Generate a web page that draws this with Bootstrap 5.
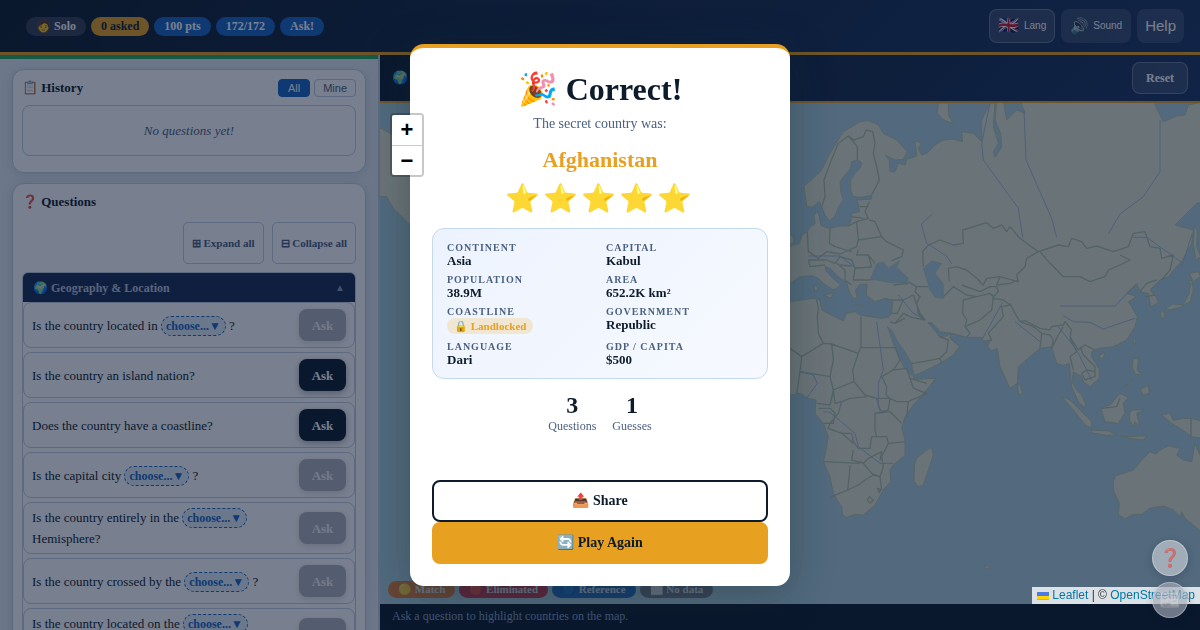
<!DOCTYPE html>
<html lang="en">
<head>
<meta charset="utf-8">
<meta name="viewport" content="width=device-width, initial-scale=1">
<title>Guess the Country</title>
<link href="https://cdn.jsdelivr.net/npm/bootstrap@5.3.0/dist/css/bootstrap.min.css" rel="stylesheet">
<style>
:root{--navy:#0d1b2a;--gold:#e8a020;--blue:#1565c0;--muted-ink:#4a6080;--line:#c0cfe0}
body{font-family:"Liberation Serif",serif;color:var(--navy);font-size:13px;line-height:20px}
button{font-family:inherit}
.sans{font-family:"Liberation Sans",sans-serif}
.topbar{height:55px;padding:0 16px 0 26px;border-bottom:3px solid var(--gold);background:linear-gradient(135deg,#0d1b2a,#1a3560)}
.pills{gap:5px}
.tools{gap:6px}
.pill{border-radius:20px;padding:0 10px;line-height:19px;font-size:12px;font-weight:700;color:#fff;background:var(--blue);white-space:nowrap}
.pill-solo{background:#333f50}
.pill-gold{background:var(--gold);color:var(--navy)}
.toolbtn{height:34px;border-radius:8px;border:1px solid transparent;background:rgba(255,255,255,.13);color:#fff;line-height:16px}
.toolbtn-lined{border-color:rgba(255,255,255,.25)}
.toolbtn small{font-size:10px}
.tool-flag{font-size:17px;margin-right:5px}
.tool-emoji{font-size:15px;margin-right:4px}
.tool-help{font-size:15px;padding:0 7px}
.side{width:380px;border-right:2px solid var(--line);background:#e6edf6}
.side-bar{height:4px;background:#27ae60}
.side-body{padding:10px 12px;gap:10px}
.panel{background:#fff;border:1px solid var(--line);border-radius:12px;padding:9px;box-shadow:0 2px 12px rgba(13,27,42,.12)}
.panel-log{padding-bottom:16px}
.panel h2{font-size:13px;line-height:18px;font-weight:700;margin:0}
.tab-btn{font-size:11px;line-height:16px;padding:0 8px;border-radius:4px;border:1px solid var(--line);background:#fff;color:var(--muted-ink)}
.tab-on{background:var(--blue);border-color:var(--blue);color:#fff;padding:0 9px}
.empty-log{border:1px solid var(--line);border-radius:8px;height:51px;font-style:italic;color:var(--muted-ink)}
.folds{margin:11px 0 8px}
.fold-btn{height:42px;padding:0 8px;border:1px solid var(--line);border-radius:5px;background:#fff;color:var(--muted-ink);font-size:11px;font-weight:700}
.cat{border:1px solid var(--line);border-radius:6px 6px 0 0;overflow:hidden}
.cat-head{height:29px;padding:0 10px;border:0;background:#182a50;color:#b8c6da;font-weight:700;font-size:12px}
.caret-up{font-size:10px;color:#8a9ab5}
.ask-row{border:1px solid var(--line);border-radius:8px;min-height:46px;padding:4px 8px;background:#fff;line-height:21px}
.ask-btn{height:32px;width:47px;flex:none;border:0;border-radius:8px;background:#0d1b2a;color:#fff;font-weight:700;font-size:13px;box-shadow:0 2px 6px rgba(13,27,42,.35)}
.ask-btn:disabled{background:#b0b3ba;color:#f3f3f5;box-shadow:0 2px 6px rgba(13,27,42,.15)}
.chip{display:inline-block;height:20px;padding:0 4px;border:1px dashed var(--blue);border-radius:12px;background:#e3effa;color:var(--blue);font-weight:700;font-size:12px;line-height:16px;vertical-align:baseline}
.map-head{height:48px;padding:0 12px;border-bottom:2px solid var(--gold);background:linear-gradient(135deg,#0d1b2a,#1a3560)}
.globe{font-size:13px}
.reset-btn{height:32px;padding:0 13px;font-size:12px;font-weight:700}
.map-area{background:#aacfdb}
.map-area>svg{position:absolute;inset:0;width:100%;height:100%}
.land{fill:#e1e5cf;stroke:#b4c8a8;stroke-width:3;stroke-linejoin:round}
.sea{fill:#aacfdb;stroke:#b4c8a8;stroke-width:2}
.bord{fill:none;stroke:#adc0a4;stroke-width:4;stroke-linejoin:round}
.riv{fill:none;stroke:#a3b9d3;stroke-width:3}
.legend{left:8px;bottom:6px;gap:4px}
.legend span{border-radius:12px;padding:0 10px;line-height:17px;font-size:11px;font-weight:700;color:#e6eaf0;opacity:.9}
.lg-match{background:#e0752a}.lg-out{background:#c8283f}.lg-ref{background:var(--blue)}.lg-none{background:#6b7280}
.map-foot{height:26px;padding:0 12px;background:#0d1b2a;color:#8aa0c4;font-size:12px;line-height:25px}
.veil{position:fixed;inset:0;z-index:20;background:rgba(10,22,50,.55)}
.zoomer{position:absolute;left:10px;top:10px;z-index:30;border:2px solid rgba(0,0,0,.22);border-radius:4px;background-clip:padding-box}
.zoomer button{width:30px;height:30px;border:0;background:#fff;color:#000;font:700 22px/30px "Liberation Sans",sans-serif;padding:0}
.zoomer button+button{border-top:1px solid #ccc}
.credit{position:absolute;right:0;bottom:0;z-index:30;background:rgba(255,255,255,.8);padding:0 5px;font-size:12px;line-height:17px;color:#333}
.credit a{color:#0078a8;text-decoration:none}
.floaters{position:fixed;right:12px;bottom:12px;z-index:40;gap:6px}
.floaters button{width:36px;height:36px;border-radius:50%;border:1px solid rgba(255,255,255,.3);padding:0;font-size:18px;box-shadow:0 2px 8px rgba(13,27,42,.2)}
.fl-help{background:rgba(255,255,255,.45);color:rgba(0,0,0,.6)}
.fl-news{background:rgba(165,170,185,.65);color:rgba(0,0,0,.35)}
.win{width:380px;border-top:4px solid var(--gold);border-radius:14px;background:#fff;padding:22px;box-shadow:0 8px 40px rgba(13,40,40,.35)}
.win h1{font-size:32px;line-height:38px;font-weight:700;margin:0 0 5px}
.win-sub{font-size:14px;line-height:21px;color:var(--muted-ink);margin:0 0 10px}
.win-name{font-size:22px;line-height:32px;font-weight:700;color:var(--gold)}
.stars{font-size:28px;line-height:42px;letter-spacing:3px;padding-top:2px}
.facts{display:grid;grid-template-columns:1fr 1fr;gap:6px 12px;border:1px solid #c2d9f0;border-radius:12px;padding:12px 14px;margin:8px 0 12px;background:linear-gradient(135deg,#edf3fe,#f6f9ff)}
.facts dt{font-size:10px;line-height:13px;letter-spacing:1px;color:var(--muted-ink)}
.facts dd{font-size:13px;line-height:13px;font-weight:700;margin:0}
.locked{display:inline-block;background:#f0e6d2;color:var(--gold);border-radius:10px;padding:0 7px;font-size:11px;line-height:16px}
.score{margin-bottom:47px}
.score b{display:block;font-size:24px;line-height:28px}
.score span{font-size:12px;line-height:14px;color:var(--muted-ink);display:block}
.big-btn{height:42px;border-radius:8px;font-size:14px;font-weight:700;border:2px solid var(--navy);background:#fff;color:var(--navy)}
.big-gold{background:var(--gold);border-color:var(--gold)}
</style>
</head>
<body>
<div class="vh-100 d-flex flex-column overflow-hidden">
<header class="topbar d-flex align-items-center justify-content-between flex-shrink-0">
  <div class="pills d-flex align-items-center">
    <span class="pill pill-solo">🧑 Solo</span><span class="pill pill-gold">0 asked</span><span class="pill">100 pts</span><span class="pill">172/172</span><span class="pill">Ask!</span>
  </div>
  <div class="tools d-flex sans">
    <button type="button" class="toolbtn toolbtn-lined d-flex align-items-center px-2"><span class="tool-flag">🇬🇧</span><small>Lang</small></button>
    <button type="button" class="toolbtn d-flex align-items-center px-2"><span class="tool-emoji">🔊</span><small>Sound</small></button>
    <button type="button" class="toolbtn tool-help">Help</button>
  </div>
</header>
<div class="d-flex flex-grow-1 overflow-hidden">
  <aside class="side flex-shrink-0 overflow-hidden">
    <div class="side-bar"></div>
    <div class="d-flex flex-column side-body">
      <section class="panel panel-log">
        <div class="d-flex align-items-center justify-content-between mb-2">
          <h2>📋 History</h2>
          <div class="d-flex gap-1 sans"><button type="button" class="tab-btn tab-on">All</button><button type="button" class="tab-btn">Mine</button></div>
        </div>
        <div class="empty-log d-flex align-items-center justify-content-center">No questions yet!</div>
      </section>
      <section class="panel">
        <h2>❓ Questions</h2>
        <div class="d-flex gap-2 justify-content-end folds"><button type="button" class="fold-btn">⊞ Expand all</button><button type="button" class="fold-btn">⊟ Collapse all</button></div>
        <div class="cat">
          <button type="button" class="cat-head w-100 d-flex align-items-center justify-content-between"><span>🌍 Geography &amp; Location</span><span class="caret-up">▲</span></button>
          <div class="d-flex flex-column gap-1">
            <div class="ask-row d-flex align-items-center justify-content-between"><div>Is the country located in <button type="button" class="chip">choose...▼</button> ?</div><button type="button" class="ask-btn" disabled>Ask</button></div>
            <div class="ask-row d-flex align-items-center justify-content-between"><div>Is the country an island nation?</div><button type="button" class="ask-btn">Ask</button></div>
            <div class="ask-row d-flex align-items-center justify-content-between"><div>Does the country have a coastline?</div><button type="button" class="ask-btn">Ask</button></div>
            <div class="ask-row d-flex align-items-center justify-content-between"><div>Is the capital city <button type="button" class="chip">choose...▼</button> ?</div><button type="button" class="ask-btn" disabled>Ask</button></div>
            <div class="ask-row d-flex align-items-center justify-content-between"><div>Is the country entirely in the <button type="button" class="chip">choose...▼</button> Hemisphere?</div><button type="button" class="ask-btn" disabled>Ask</button></div>
            <div class="ask-row d-flex align-items-center justify-content-between"><div>Is the country crossed by the <button type="button" class="chip">choose...▼</button> ?</div><button type="button" class="ask-btn" disabled>Ask</button></div>
            <div class="ask-row d-flex align-items-center justify-content-between"><div>Is the country located on the <button type="button" class="chip">choose...▼</button> Hemisphere?</div><button type="button" class="ask-btn" disabled>Ask</button></div>
          </div>
        </div>
      </section>
    </div>
  </aside>
  <main class="flex-grow-1 d-flex flex-column">
    <div class="map-head d-flex align-items-center justify-content-between"><span class="globe">🌍</span><button type="button" class="toolbtn toolbtn-lined reset-btn">Reset</button></div>
    <div class="map-area position-relative flex-grow-1">
      <svg viewBox="-1200 9 2460 1503" preserveAspectRatio="xMidYMid slice" aria-hidden="true">
        <path class="land" d="M72 258L80 318 95 322 118 305 125 320 135 345 148 362 165 350 175 320 190 300 182 275 180 245 195 225 212 205 215 185 235 180 246 190 240 205 225 220 212 240 212 270 220 290 245 292 275 286 275 297 230 300 236 315 238 335 215 340 212 365 205 378 180 378 150 385 125 378 120 365 118 350 112 334 102 345 105 372 90 380 82 396 66 405 58 430 30 440-60 480 0 560 30 550 60 530 95 527 115 535 132 552 160 570 175 560 182 555 160 536 140 515 135 500 150 505 175 530 200 548 208 575 220 595 232 595 226 570 240 553 262 553 258 585 285 605 315 595 338 600 335 640 325 652 300 655 240 645 225 635 200 640 190 663 160 648 125 630 120 600 100 595 30 605-300 640-300 860 30 885 60 880 85 895 108 900 105 940 130 970 145 1010 140 1040 130 1085 150 1130 160 1180 185 1220 188 1245 200 1252 225 1243 250 1245 285 1215 310 1170 332 1145 330 1110 340 1095 375 1065 375 1020 365 985 375 950 400 915 440 870 467 835 402 838 400 828 430 815 480 790 520 765 538 740 525 728 510 715 512 698 500 708 478 710 468 695 443 668 455 668 480 695 515 700 560 712 605 712 612 728 630 725 622 740 635 752 652 745 660 800 690 865 712 850 715 800 750 770 780 745 815 740 830 790 850 797 868 790 875 860 895 905 915 925 916 910 905 885 890 870 876 845 880 815 905 830 910 845 930 860 958 835 958 808 935 770 935 755 945 750 960 745 1000 740 1040 720 1065 680 1072 650 1055 620 1045 605 1070 590 1040 580 1072 553 1080 575 1105 580 1112 620 1135 608 1128 590 1110 570 1140 540 1165 530 1190 500 1205 485 1235 430 1240 390 1185 375 1250 310 1300 305 1300 0 1225 15 1215 45 1190 48 1150 65 1128 20 1120 0 720 0 735 40 710 30 680 60 670 0 650 0 645 60 662 100 665 140 645 172 640 155 655 130 640 80 645 9 630 9 605 60 605 125 580 100 545 95 548 125 520 118 490 120 465 135 440 160 425 165 415 145 425 130 405 122 410 168 380 178 375 195 355 190 345 215 330 215 328 180 315 165 345 180 370 178 382 155 350 120 310 100 295 75 265 62 240 65 190 95 150 160 125 210 100 235Z"/>
        <path class="sea" d="M270 540L290 492 310 486 325 505 358 482 350 502 385 535 380 548 330 548 290 540ZM430 505L455 483 485 490 465 520 490 552 490 595 465 592 450 570ZM322 680L335 690 350 720 375 755 395 790 402 825 393 825 370 800 345 745Z"/>
        <g class="land">
          <path d="M403 1095L410 1075 440 1050 455 1042 460 1065 445 1110 430 1155 415 1160 402 1145Z"/>
          <path d="M712 850L722 860 728 880 716 885Z"/>
          <path d="M845 890L870 900 900 930 935 965 935 985 915 975 880 930Z"/>
          <path d="M935 990L985 993 1010 1005 980 1006 935 998ZM1020 1008L1050 1010 1080 1008 1100 1008 1090 1020 1050 1015Z"/>
          <path d="M962 925L990 915 1020 880 1045 892 1030 910 1035 940 1015 970 975 965Z"/>
          <path d="M1050 935L1060 930 1095 928 1070 940 1080 980 1065 965 1060 980 1048 960Z"/>
          <path d="M1060 775L1075 777 1072 810 1085 825 1065 822 1056 800ZM1080 870L1105 855 1108 880 1090 885ZM1030 860L1055 838 1052 845Z"/>
          <path d="M1145 945L1170 940 1180 962 1210 955 1235 955 1270 965 1270 1015 1235 1010 1200 985 1175 970Z"/>
          <path d="M958 765L975 758 970 775 960 775ZM1060 720L1068 712 1063 740Z"/>
          <path d="M1140 640L1150 630 1155 650 1145 655ZM1155 625L1180 612 1210 615 1228 580 1232 550 1225 545 1235 540 1240 570 1230 605 1200 622 1170 630ZM1228 520L1255 515 1262 530 1240 545ZM1243 380L1252 390 1250 440 1262 470 1248 480 1240 430Z"/>
          <path d="M475 9L505 9 505 45 520 70 490 60 472 40Z"/>
          <path d="M1000 1145L1000 1170 1018 1210 1015 1245 1035 1256 1060 1243 1085 1243 1110 1225 1150 1218 1180 1230 1200 1250 1205 1235 1215 1255 1260 1292 1300 1292 1300 1100 1262 1070 1245 1030 1235 1085 1210 1080 1190 1065 1200 1045 1165 1038 1140 1050 1128 1062 1110 1055 1085 1080 1060 1110 1005 1128Z"/>
          <path d="M-1220 80L-1195 86-1160 106-1080 125-700 140-700 500-1080 420-1110 375-1135 350-1160 325-1180 290-1220 288Z"/>
          <path d="M130 585L158 580 155 595ZM103 560L112 558 112 572 104 572ZM228 615L255 617 240 621ZM0 410L38 405 42 425 20 440ZM615 1395L632 1402 618 1408Z"/>
        </g>
        <path class="bord" d="M125 320L135 290 132 240 150 190 175 130 205 108 232 140 232 180M205 108L222 120 250 110 258 90 278 95 285 130 280 160 290 200 298 240 275 285M82 396L85 455 115 475 140 455 180 462 230 440 235 418 230 365 205 378M150 385L148 430 165 440 215 455M230 365L265 355 255 335 268 305M268 360L285 365 305 410 235 420M305 410L320 425 370 450 365 470 335 482M235 450L230 465 265 465 285 490M265 465L275 500 225 505 215 480 180 470 165 490 140 480 85 480M225 505L220 540 270 540M170 490L195 510 195 540 215 555M180 495L215 498M240 320L265 320M215 350L250 355M85 480L90 500 135 495M430 500L428 455 445 435 480 420 520 435 550 430 548 390 620 368 640 385 665 375 680 395 690 380 715 410 740 430 775 455 740 475 735 500 710 525 715 545 660 530 620 535 610 555 590 535 560 510 530 500 505 505 508 545M775 455L835 435 865 440 875 415 905 425 920 445 950 438 1000 455 1045 440 1060 400 1095 395 1110 440 1140 445 1145 475 1180 465 1170 510 1145 540M780 455L810 490 850 530 900 530 930 545 975 530 985 510 1020 495 1050 480 1020 465M385 545L410 560 445 560M410 560L405 575 420 590 410 610 415 640 430 660M385 550L340 555M338 600L370 600 400 585 420 640 435 660 395 652 370 640 345 670 330 665M335 640L352 640 370 600M490 590L520 560 560 585 590 590 550 600 548 640 560 660 555 680 570 700 560 712M590 590L630 580 640 590 635 630 600 660 555 680M545 555L600 575 630 560 650 560 655 575 640 590M660 530L650 555 690 550 715 540M640 595L670 600 690 615 665 620 670 650 625 700 635 720 610 725M690 610L705 640 720 665 760 680 785 700 780 745M720 665L735 662 780 685 810 690 815 680 850 675 855 665 875 690 870 710 895 750M785 700L810 705 820 720 815 745M850 680L835 705 815 745M870 715L890 755 870 770 880 810M895 750L915 735 945 750M900 740L910 765 945 800 945 830 915 840 905 820 920 810 945 815M1080 575L1100 550 1130 540M1095 590L1125 585M330 665L345 670 375 655M395 790L430 785 480 775 500 755 505 720 478 710M480 775L485 790M110 600L115 625 112 650 115 700 130 730M243 650L243 745M243 743L345 743M130 730L65 770 30 745M130 730L155 732 235 760 240 745M155 732L160 780 150 830 60 815 65 770M235 760L218 810 222 845 255 885 290 895 330 895M150 830L160 870 222 845M60 815L50 880M160 870L150 915 110 910M160 870L165 910 185 905 210 895 260 890M115 925L150 925 165 940 160 970 130 970M185 905L175 940 150 970 145 985 185 1000 215 1000 220 1025 235 1045 270 1045 275 1010 320 1010 325 1030 375 1025M345 740L360 780 340 810 305 830 320 860 318 885 330 895M340 810L380 805 390 835 440 850M390 835L400 865 440 880 385 905 380 950M330 895L325 930 285 940 285 990 290 1010M290 940L330 935 365 970M290 895L300 930M330 895L350 905 385 905M130 1085L195 1088 235 1090 245 1085M210 1095L208 1125 203 1170 150 1192M203 1170L235 1155 255 1140 280 1125 300 1130 305 1170M220 1050L215 1080 250 1090 265 1075 305 1055 300 1080 325 1030 320 1010M250 1090L275 1120 300 1130 310 1100 305 1070M262 1200L268 1190 280 1200 270 1210ZM292 1165L302 1168 298 1178ZM180 995L220 1030M965 925L1010 920 1020 895M1233 955V1015"/>
        <path class="riv" d="M630 10L605 130 610 180 715 325 728 412M732 30L738 180 815 355 830 412M1140 60V215L1090 290 1020 342 985 402M457 342L424 372 440 430 500 468 515 492M85 468H180L225 503H275M1060 412H1100L1205 487M1237 400L1205 500M840 618H1005L1070 550M850 647L880 665 930 667 970 687 1065 655M668 607L605 720M705 665L780 725M355 585L400 640 435 658M290 665L310 810 295 850V920L310 940M835 680L890 750 935 840M130 935L150 937 225 1000 235 1040 300 1090H340M60 815L100 825 112 850 80 895"/>
      </svg>
      <div class="legend position-absolute d-flex">
        <span class="lg-match">🟡 Match</span><span class="lg-out">🔴 Eliminated</span><span class="lg-ref">🔵 Reference</span><span class="lg-none">⬜ No data</span>
      </div>
      <div class="zoomer d-flex flex-column overflow-hidden"><button type="button" aria-label="Zoom in">+</button><button type="button" aria-label="Zoom out">−</button></div>
      <div class="credit sans"><svg width="12" height="8" viewBox="0 0 12 8" aria-hidden="true"><path fill="#4c7be1" d="M0 0h12v4H0z"/><path fill="#ffd500" d="M0 4h12v3H0z"/><path fill="#e0bc00" d="M0 7h12v1H0z"/></svg> <a href="#">Leaflet</a> | © <a href="#">OpenStreetMap</a></div>
    </div>
    <div class="map-foot">Ask a question to highlight countries on the map.</div>
  </main>
</div>
</div>
<div class="veil d-flex align-items-center justify-content-center" role="dialog" aria-labelledby="winTitle">
  <div class="win text-center">
    <h1 id="winTitle">🎉 Correct!</h1>
    <p class="win-sub">The secret country was:</p>
    <div class="win-name">Afghanistan</div>
    <div class="stars">⭐⭐⭐⭐⭐</div>
    <dl class="facts text-start">
      <div><dt>CONTINENT</dt><dd>Asia</dd></div><div><dt>CAPITAL</dt><dd>Kabul</dd></div>
      <div><dt>POPULATION</dt><dd>38.9M</dd></div><div><dt>AREA</dt><dd>652.2K km²</dd></div>
      <div><dt>COASTLINE</dt><dd><span class="locked">🔒 Landlocked</span></dd></div><div><dt>GOVERNMENT</dt><dd>Republic</dd></div>
      <div><dt>LANGUAGE</dt><dd>Dari</dd></div><div><dt>GDP / CAPITA</dt><dd>$500</dd></div>
    </dl>
    <div class="score d-flex justify-content-center gap-3"><div><b>3</b><span>Questions</span></div><div><b>1</b><span>Guesses</span></div></div>
    <button type="button" class="big-btn w-100 d-block">📤 Share</button>
    <button type="button" class="big-btn big-gold w-100 d-block">🔄 Play Again</button>
  </div>
</div>
<div class="floaters d-flex flex-column"><button type="button" class="fl-help" aria-label="Help">❓</button><button type="button" class="fl-news" aria-label="News">📰</button></div>
<script src="https://cdn.jsdelivr.net/npm/bootstrap@5.3.0/dist/js/bootstrap.bundle.min.js"></script>
</body>
</html>
